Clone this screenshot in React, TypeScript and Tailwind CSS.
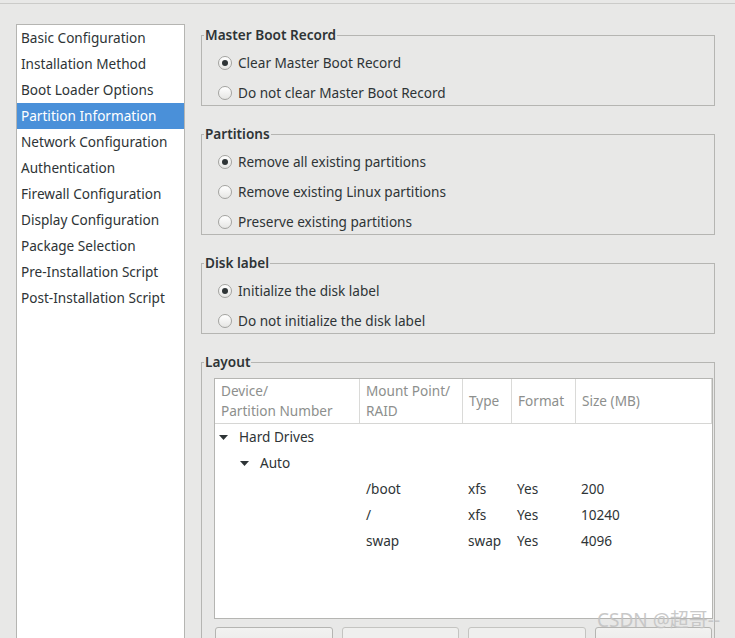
const sections = [
  "Basic Configuration",
  "Installation Method",
  "Boot Loader Options",
  "Partition Information",
  "Network Configuration",
  "Authentication",
  "Firewall Configuration",
  "Display Configuration",
  "Package Selection",
  "Pre-Installation Script",
  "Post-Installation Script",
];

const partitions = [
  { mount: "/boot", type: "xfs", format: "Yes", size: "200" },
  { mount: "/", type: "xfs", format: "Yes", size: "10240" },
  { mount: "swap", type: "swap", format: "Yes", size: "4096" },
];

const cols = "grid grid-cols-[145px_103px_49px_64px_1fr]";

function Radio({ label, checked }: { label: string; checked?: boolean }) {
  return (
    <div className="flex h-[26px] items-center gap-[6px] pl-[16px] pt-[2px]">
      <span className="flex h-[14px] w-[14px] items-center justify-center rounded-full border border-[#a3a3a0] bg-gradient-to-b from-white to-[#e6e6e4]">
        {checked && <span className="h-[6px] w-[6px] rounded-full bg-[#2e3436]" />}
      </span>
      <span>{label}</span>
    </div>
  );
}

function Group({ title, children }: { title: string; children: React.ReactNode }) {
  return (
    <fieldset className="border border-[#b5b5b2] px-0 pb-0">
      <legend className="ml-[2px] px-[1px] leading-[20px] font-semibold text-[#2e3436]">{title}</legend>
      <div className="flex flex-col gap-[4px] pt-[4px]">{children}</div>
    </fieldset>
  );
}

function Caret() {
  return (
    <svg width="9" height="5" viewBox="0 0 9 5" className="shrink-0">
      <path d="M0 0h9L4.5 5z" fill="#2e3436" />
    </svg>
  );
}

export default function App() {
  return (
    <div className="relative h-[638px] w-[735px] overflow-hidden bg-[#e8e8e7] font-['Noto_Sans',sans-serif] text-[13.6px] text-[#2e3436]">
      <div className="mt-[3px] border-t border-[#cbcbc9]" />
      <div className="flex gap-[16px] pl-[16px] pt-[20px]">
        <ul className="h-[700px] w-[169px] shrink-0 border border-[#b5b5b2] bg-white">
          {sections.map((s) => (
            <li
              key={s}
              className={
                s === "Partition Information"
                  ? "h-[26px] bg-[#4a90d9] pl-[4px] leading-[26px] text-white"
                  : "h-[26px] pl-[4px] leading-[26px]"
              }
            >
              {s}
            </li>
          ))}
        </ul>

        <div className="flex w-[514px] flex-col gap-[18px] pt-[1px]">
          <Group title="Master Boot Record">
            <Radio label="Clear Master Boot Record" checked />
            <Radio label="Do not clear Master Boot Record" />
          </Group>
          <Group title="Partitions">
            <Radio label="Remove all existing partitions" checked />
            <Radio label="Remove existing Linux partitions" />
            <Radio label="Preserve existing partitions" />
          </Group>
          <Group title="Disk label">
            <Radio label="Initialize the disk label" checked />
            <Radio label="Do not initialize the disk label" />
          </Group>

          <fieldset className="h-[320px] border border-[#b5b5b2] px-0">
            <legend className="ml-[2px] px-[1px] leading-[20px] font-semibold">Layout</legend>
            <div className="ml-[12px] mr-[1px] mt-[6px] h-[241px] border border-[#b5b5b2] bg-white">
              <div className={`${cols} h-[45px] border-b border-[#d6d6d4] leading-[20px] text-[#8d8f8d]`}>
                <div className="flex flex-col justify-center border-r border-[#dadad8] px-[6px]">
                  <span>Device/</span>
                  <span>Partition Number</span>
                </div>
                <div className="flex flex-col justify-center border-r border-[#dadad8] px-[6px]">
                  <span>Mount Point/</span>
                  <span>RAID</span>
                </div>
                <div className="flex items-center border-r border-[#dadad8] px-[6px]">Type</div>
                <div className="flex items-center border-r border-[#dadad8] px-[6px]">Format</div>
                <div className="flex items-center border-r border-[#dadad8] px-[6px]">Size (MB)</div>
              </div>
              <div className="flex h-[26px] items-center gap-[11px] pl-[4px]">
                <Caret />
                <span>Hard Drives</span>
              </div>
              <div className="flex h-[26px] items-center gap-[11px] pl-[25px]">
                <Caret />
                <span>Auto</span>
              </div>
              {partitions.map((p) => (
                <div key={p.mount} className={`${cols} h-[26px] items-center`}>
                  <span />
                  <span className="pl-[6px]">{p.mount}</span>
                  <span className="pl-[5px]">{p.type}</span>
                  <span className="pl-[5px]">{p.format}</span>
                  <span className="pl-[5px]">{p.size}</span>
                </div>
              ))}
            </div>
            <div className="ml-[13px] mr-[2px] mt-[8px] grid grid-cols-4 gap-[9px]">
              {[
                { label: "Add", on: true },
                { label: "Edit", on: false },
                { label: "Delete", on: false },
                { label: "RAID", on: true },
              ].map((b) => (
                <button
                  key={b.label}
                  className={
                    b.on
                      ? "h-[34px] rounded-[3px] border border-[#b5b5b2] bg-gradient-to-b from-[#f2f2f1] to-[#e4e4e2] text-[#2e3436]"
                      : "h-[34px] rounded-[3px] border border-[#c4c4c1] bg-[#efefee] text-[#9a9c9a]"
                  }
                >
                  {b.label}
                </button>
              ))}
            </div>
          </fieldset>
        </div>
      </div>

      <div className="absolute left-[597px] top-[606px] font-['Noto_Sans','Noto_Sans_CJK_SC',sans-serif] text-[19px] text-[#c4c4c4] opacity-90">
        CSDN @超哥--
      </div>
    </div>
  );
}
